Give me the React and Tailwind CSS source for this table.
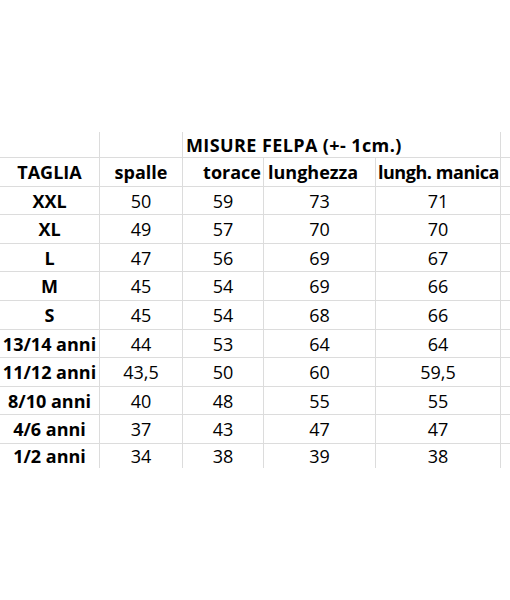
import React from "react";

const rows = [
  ["XXL", "50", "59", "73", "71"],
  ["XL", "49", "57", "70", "70"],
  ["L", "47", "56", "69", "67"],
  ["M", "45", "54", "69", "66"],
  ["S", "45", "54", "68", "66"],
  ["13/14 anni", "44", "53", "64", "64"],
  ["11/12 anni", "43,5", "50", "60", "59,5"],
  ["8/10 anni", "40", "48", "55", "55"],
  ["4/6 anni", "37", "43", "47", "47"],
  ["1/2 anni", "34", "38", "39", "38"],
];

// row heights so gridlines fall on the same pixels as the sheet
const heights = ["h-[28px]", "h-[29px]", "h-[28px]", "h-[29px]", "h-[29px]", "h-[28px]", "h-[29px]", "h-[28px]", "h-[29px]", "h-[25px]"];

const cols = "grid grid-cols-[100px_83px_81px_112px_125px_9px]";
const line = "border-[#dcdcdc]";

export default function App() {
  return (
    <div
      className="w-[510px] h-[600px] bg-white text-black overflow-hidden pt-[132px]"
      style={{ fontFamily: "'Open Sans', Lato, sans-serif" }}
    >
      {/* titolo */}
      <div className={`${cols} h-[25px] text-[18px] font-bold leading-none`}>
        <div className={`border-r ${line}`} />
        <div className={`border-r ${line}`} />
        <div className={`col-span-3 border-r ${line} flex items-center pl-[3px] whitespace-nowrap tracking-[0.4px]`}>
          MISURE FELPA (+- 1cm.)
        </div>
        <div />
      </div>

      {/* intestazione */}
      <div className={`${cols} h-[29px] border-t ${line} text-[18px] font-bold leading-none`}>
        <div className={`border-r ${line} flex items-center justify-center`}>TAGLIA</div>
        <div className={`border-r ${line} flex items-center justify-center`}>spalle</div>
        <div className={`border-r ${line} flex items-center justify-end pr-[2px]`}>torace</div>
        <div className={`border-r ${line} flex items-center pl-[4px]`}>lunghezza</div>
        <div className={`border-r ${line} flex items-center justify-center pl-[1px] whitespace-nowrap tracking-[-0.45px]`}>lungh. manica</div>
        <div />
      </div>

      {rows.map((r, i) => (
        <div key={r[0]} className={`${cols} ${heights[i]} border-t ${line} text-[18px] leading-none`}>
          <div className={`border-r ${line} flex items-center justify-center font-bold whitespace-nowrap`}>{r[0]}</div>
          {r.slice(1).map((v, j) => (
            <div key={j} className={`border-r ${line} flex items-center justify-center`}>
              {v}
            </div>
          ))}
          <div />
        </div>
      ))}
    </div>
  );
}
